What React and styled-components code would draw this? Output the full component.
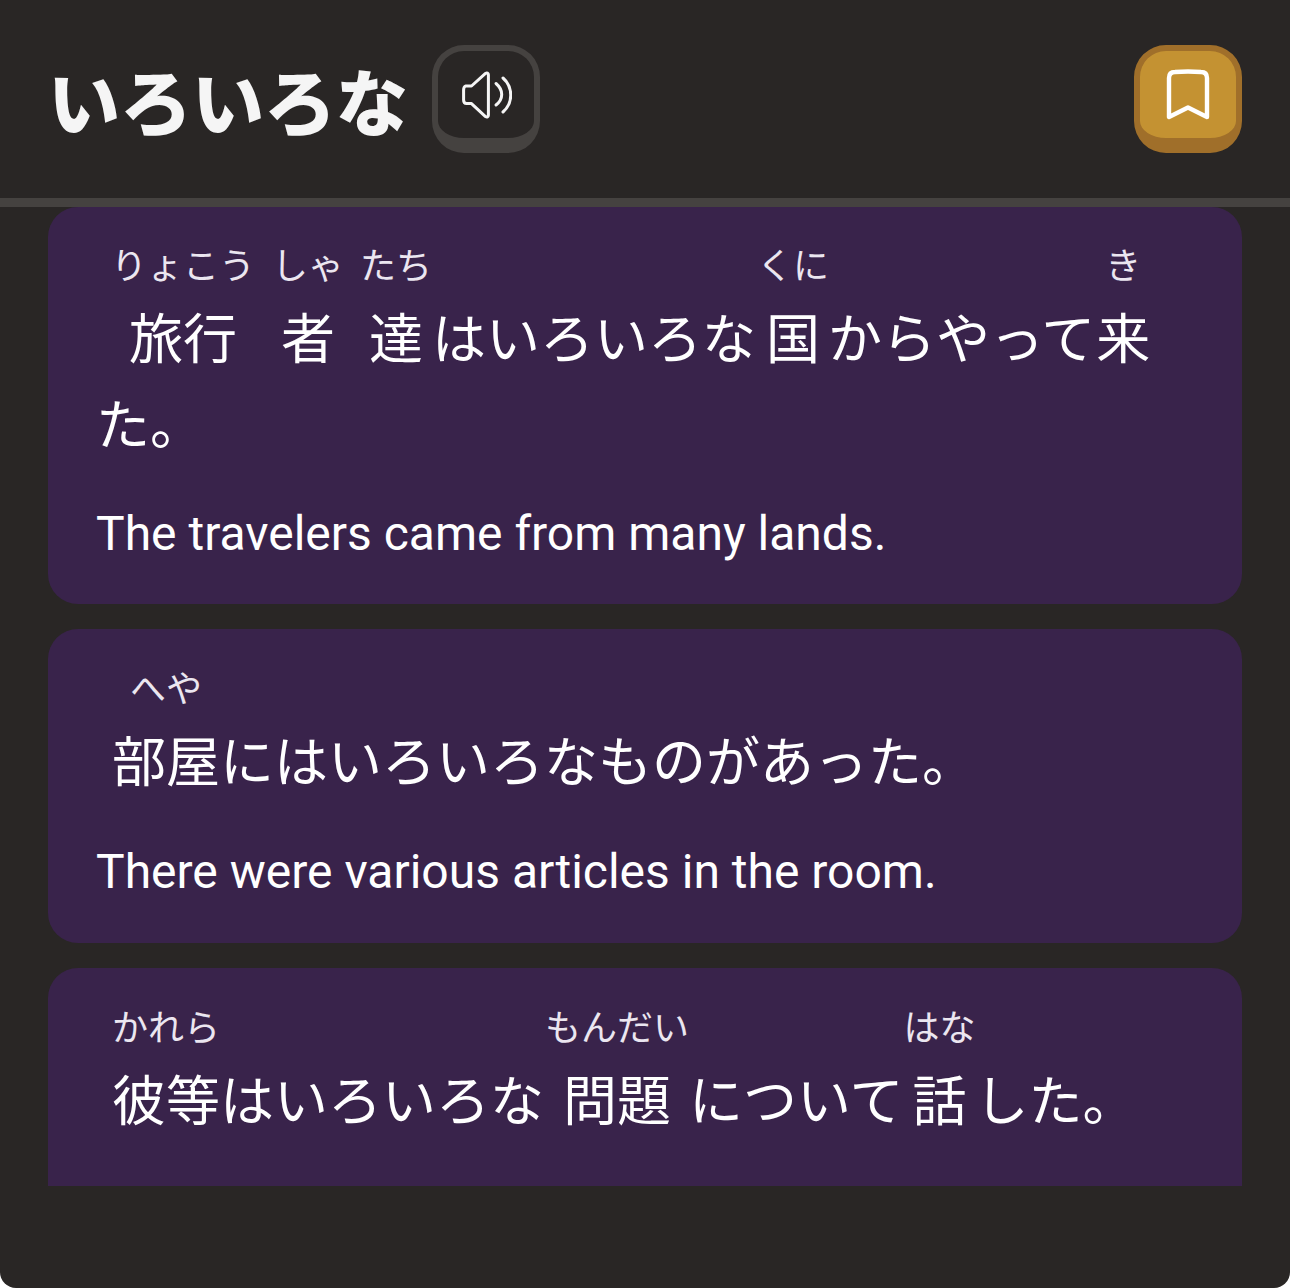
import React from "react";
import styled, { createGlobalStyle } from "styled-components";

const Global = createGlobalStyle`
  html, body { margin: 0; padding: 0; background: #ffffff; }
  #root { width: 1290px; height: 1288px; }
`;

const JP = `"Noto Sans CJK JP", "Noto Sans", sans-serif`;

const Screen = styled.div`
  width: 1290px;
  height: 1288px;
  background: #292625;
  border-radius: 0 0 16px 16px;
  overflow: hidden;
  display: flex;
  flex-direction: column;
`;

const Header = styled.header`
  height: 198px;
  flex: none;
  box-sizing: content-box;
  border-bottom: 9px solid #454240;
  padding: 0 48px;
  display: flex;
  align-items: center;
  justify-content: space-between;
`;

const TitleGroup = styled.div`
  display: flex;
  align-items: center;
  gap: 24px;
`;

const Title = styled.h1`
  margin: 0;
  font-family: ${JP};
  font-size: 72px;
  font-weight: 900;
  line-height: 1;
  color: #f5f5f5;
`;

const IconButton = styled.button`
  width: 108px;
  height: 108px;
  box-sizing: border-box;
  padding: 0;
  border-style: solid;
  border-width: 6px 6px 15px 6px;
  border-color: ${(p) => (p.$gold ? "#a06f2a" : "#454240")};
  border-radius: 32px;
  background: ${(p) => (p.$gold ? "#c49232" : "#292625")};
  display: flex;
  align-items: center;
  justify-content: center;
`;

const Scroll = styled.div`
  height: 979px;
  flex: none;
  overflow: hidden;
  padding: 0 48px;
  display: flex;
  flex-direction: column;
  gap: 25px;
`;

const Card = styled.article`
  flex: none;
  box-sizing: border-box;
  background: #39234b;
  border-radius: 30px;
  min-height: ${(p) => p.$minHeight || 0}px;
  padding: ${(p) => p.$top || 30}px 48px ${(p) => p.$bottom || 38}px;
`;

const Sentence = styled.p`
  margin: 0;
  font-family: ${JP};
  font-size: 54px;
  line-height: 86px;
  color: #ffffff;
`;

const Word = styled.ruby`
  margin-left: ${(p) => p.$l || 0}px;
  margin-right: ${(p) => p.$r || 0}px;
  ruby-position: over;
  ruby-align: center;
  rt {
    font-size: 36px;
    line-height: 1.2;
    padding-bottom: 22px;
    color: #ebe6f0;
    font-family: ${JP};
    ruby-align: center;
  }
`;

const Translation = styled.p`
  margin: ${(p) => p.$top || 37}px 0 0;
  font-family: Roboto, sans-serif;
  font-size: 48px;
  line-height: 64px;
  color: #ffffff;
`;

const SpeakerIcon = () => (
  <svg width="52" height="48" viewBox="-2 0 52 48" fill="none" stroke="#f5f5f5" strokeWidth="3" strokeLinecap="round" strokeLinejoin="round">
    <path d="M3.5 15 C2.2 15.6 1.6 17 1.6 19 L1.6 29 C1.6 31 2.4 32.6 4.6 32.6 L9.5 32.6 L23.5 45.6 C25 46.6 26.4 45.9 26.4 44.2 L26.4 3.8 C26.4 2.1 25 1.4 23.5 2.4 L9.5 15 Z" />
    <path d="M34 12.5 C41.6 19 41.6 28 34 34" />
    <path d="M41 7 C51.3 16 51.3 32 41 41" />
  </svg>
);

const BookmarkIcon = () => (
  <svg width="44" height="52" viewBox="0 0 44 52" fill="none" stroke="#ffffff" strokeWidth="4.4" strokeLinecap="round" strokeLinejoin="round">
    <path d="M3 48 L3 9 C3 5 5 3 9 3 C17 2.4 27 2.4 35 3 C39 3 41 5 41 9 L41 48 L22 38.5 Z" />
  </svg>
);

export default function App() {
  return (
    <>
      <Global />
      <Screen>
        <Header>
          <TitleGroup>
            <Title>いろいろな</Title>
            <IconButton aria-label="play"><SpeakerIcon /></IconButton>
          </TitleGroup>
          <IconButton $gold aria-label="bookmark"><BookmarkIcon /></IconButton>
        </Header>
        <Scroll>
          <Card>
            <Sentence>
              <Word $l={15}>旅行<rt>りょこう</rt></Word>
              <Word $l={17}>者<rt>しゃ</rt></Word>
              <Word $l={16} $r={9}>達<rt>たち</rt></Word>
              はいろいろな
              <Word $l={10} $r={8}>国<rt>くに</rt></Word>
              からやって
              <Word $l={1}>来<rt>き</rt></Word>
              た。
            </Sentence>
            <Translation>The travelers came from many lands.</Translation>
          </Card>
          <Card $top={31} $bottom={39}>
            <Sentence>
              <Word $l={16}>部屋<rt>へや</rt></Word>
              にはいろいろなものがあった。
            </Sentence>
            <Translation $top={38}>There were various articles in the room.</Translation>
          </Card>
          <Card $top={31} $minHeight={300}>
            <Sentence>
              <Word $l={16}>彼等<rt>かれら</rt></Word>
              はいろいろな
              <Word $l={10} $r={9}>問題<rt>もんだい</rt></Word>
              について
              <Word $l={9} $r={8}>話<rt>はな</rt></Word>
              した。
            </Sentence>
          </Card>
        </Scroll>
      </Screen>
    </>
  );
}
